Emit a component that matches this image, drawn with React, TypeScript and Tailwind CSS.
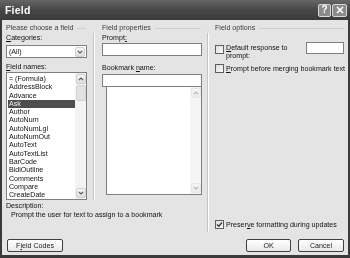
import React from "react";

const fieldNames = [
  "= (Formula)",
  "AddressBlock",
  "Advance",
  "Ask",
  "Author",
  "AutoNum",
  "AutoNumLgl",
  "AutoNumOut",
  "AutoText",
  "AutoTextList",
  "BarCode",
  "BidiOutline",
  "Comments",
  "Compare",
  "CreateDate",
];

function Chevron({ down }: { down?: boolean }) {
  return (
    <svg width="6" height="4" viewBox="0 0 6 4">
      <path
        d={down ? "M0.8 0.8 L3 3 L5.2 0.8" : "M0.8 3.2 L3 1 L5.2 3.2"}
        fill="none"
        stroke="#5a5a5a"
        strokeWidth="1.2"
      />
    </svg>
  );
}

function ScrollBtn({ down, faded }: { down?: boolean; faded?: boolean }) {
  return (
    <div
      className={`w-[10px] h-[10px] rounded-[2px] border border-[#d0d0d0] bg-gradient-to-b from-[#f6f6f6] to-[#dedede] flex items-center justify-center ${
        faded ? "opacity-40" : ""
      }`}
    >
      <Chevron down={down} />
    </div>
  );
}

function Check({ checked }: { checked?: boolean }) {
  return (
    <div className="w-[9px] h-[9px] shrink-0 border border-[#5e5e5e] bg-gradient-to-br from-[#dcdcdc] to-[#fbfbfb] flex items-center justify-center">
      {checked && (
        <svg width="7" height="7" viewBox="0 0 7 7">
          <path d="M1 3.5 L2.8 5.3 L6 1.5" fill="none" stroke="#3a3a3a" strokeWidth="1.4" />
        </svg>
      )}
    </div>
  );
}

function GroupHead({ label, w }: { label: string; w: string }) {
  return (
    <div className={`flex items-center h-[8px] ${w}`}>
      <span className="text-[#3c3c3c] whitespace-nowrap">{label}</span>
      <div className="flex-1 ml-[4px] h-px bg-[#cfcfcf]" />
    </div>
  );
}

function Btn({ children, w }: { children: React.ReactNode; w: string }) {
  return (
    <div
      className={`${w} h-[13px] rounded-[2px] border border-[#3f3f3f] bg-gradient-to-b from-[#ffffff] to-[#e9e9e9] flex items-center justify-center text-[#222]`}
    >
      {children}
    </div>
  );
}

function Sep({ h }: { h: string }) {
  return <div className={`w-[2px] ${h} mt-[9px] border-l border-[#c4c4c4] border-r border-r-white`} />;
}

export default function App() {
  return (
    <div className="w-[350px] h-[258px] grayscale flex flex-col bg-[#e4e4e4] font-['Liberation_Sans',Arial,sans-serif] text-[7.1px] leading-[8px] text-[#111]">
      {/* title bar */}
      <div className="h-[20px] shrink-0 bg-gradient-to-b from-[#666] via-[#474747] to-[#3a3a3a] flex items-center pl-[5px] pr-[3px]">
        <span className="text-white font-bold text-[10.5px] leading-none tracking-[0.2px]">Field</span>
        <div className="ml-auto flex gap-[1px]">
          <div className="w-[13px] h-[13px] rounded-[2px] border border-[#d8d8d8] bg-[#8a8a8a] flex items-center justify-center text-white font-bold text-[10px] leading-none">
            ?
          </div>
          <div className="w-[15px] h-[13px] rounded-[2px] border border-[#d8d8d8] bg-[#8a8a8a] flex items-center justify-center">
            <svg width="8" height="8" viewBox="0 0 8 8">
              <path d="M1 1 L7 7 M7 1 L1 7" stroke="white" strokeWidth="1.6" />
            </svg>
          </div>
        </div>
      </div>

      {/* body */}
      <div className="flex-1 flex flex-col border-x-[2px] border-b-[3px] border-[#3a3a3a] px-[4px] pt-[4px]">
        <div className="flex h-[208px]">
          {/* left + middle */}
          <div className="w-[196px] flex flex-col">
            <div className="flex h-[176px]">
              {/* left column */}
              <div className="w-[81px] flex flex-col">
                <GroupHead label="Please choose a field" w="w-[80px]" />
                <div className="mt-[2px] h-[8px]">
                  <span className="underline">C</span>ategories:
                </div>
                <div className="mt-[3px] h-[13px] border border-[#7f7f7f] bg-white flex items-center pl-[2px] pr-[1px]">
                  <span>(All)</span>
                  <div className="ml-auto">
                    <ScrollBtn down />
                  </div>
                </div>
                <div className="mt-[5px] h-[8px]">
                  <span className="underline">F</span>ield names:
                </div>
                <div className="mt-px h-[128px] border border-[#7f7f7f] bg-white flex">
                  <div className="flex-1 flex flex-col pt-[2px] pl-px">
                    {fieldNames.map((n) => (
                      <div
                        key={n}
                        className={`h-[8.3px] leading-[8.3px] pl-[1px] whitespace-nowrap ${
                          n === "Ask" ? "bg-[#4e4e4e] text-[#f2f2f2]" : ""
                        }`}
                      >
                        {n}
                      </div>
                    ))}
                  </div>
                  <div className="w-[11px] bg-[#f3f3f3] flex flex-col items-center pt-px pb-px">
                    <ScrollBtn />
                    <div className="w-[10px] h-[16px] mt-px rounded-[2px] border border-[#d4d4d4] bg-[#e2e2e2]" />
                    <div className="mt-auto">
                      <ScrollBtn down />
                    </div>
                  </div>
                </div>
              </div>

              <div className="ml-[6px]">
                <Sep h="h-[167px]" />
              </div>

              {/* middle column */}
              <div className="ml-[7px] w-[100px] flex flex-col">
                <GroupHead label="Field properties" w="w-[99px]" />
                <div className="mt-[2px] h-[8px]">
                  Prompt<span className="underline">:</span>
                </div>
                <div className="mt-px h-[13px] border border-[#7f7f7f] bg-white" />
                <div className="mt-[8px] h-[8px]">
                  Bookmark <span className="underline">n</span>ame:
                </div>
                <div className="mt-[2px] h-[13px] border border-[#7f7f7f] bg-white" />
                <div className="ml-[4px] h-[108px] border border-t-0 border-[#7f7f7f] bg-white flex justify-end">
                  <div className="w-[11px] bg-[#f5f5f5] flex flex-col items-center pb-px pt-px">
                    <ScrollBtn faded />
                    <div className="mt-auto">
                      <ScrollBtn down faded />
                    </div>
                  </div>
                </div>
              </div>
            </div>

            <div className="mt-[2px] h-[8px]">Description:</div>
            <div className="h-[8px] ml-[5px] mt-px whitespace-nowrap">
              Prompt the user for text to assign to a bookmark
            </div>
          </div>

          <div className="ml-[5px]">
            <Sep h="h-[199px]" />
          </div>

          {/* right column */}
          <div className="ml-[6px] w-[129px] flex flex-col">
            <GroupHead label="Field options" w="w-[129px]" />
            <div className="mt-[10px] flex items-start">
              <div className="mt-[3px]">
                <Check />
              </div>
              <div className="ml-[2px] mt-[2px] w-[78px]">
                <div>
                  <span className="underline">D</span>efault response to
                </div>
                <div>prompt:</div>
              </div>
              <div className="ml-auto w-[38px] h-[12px] border border-[#7f7f7f] bg-white" />
            </div>
            <div className="mt-[4px] flex items-center">
              <Check />
              <div className="ml-[2px] whitespace-nowrap">
                <span className="underline">P</span>rompt before merging bookmark text
              </div>
            </div>
            <div className="mt-auto mb-[3px] flex items-center">
              <Check checked />
              <div className="ml-[2px] whitespace-nowrap">
                Preser<span className="underline">v</span>e formatting during updates
              </div>
            </div>
          </div>
        </div>

        {/* buttons */}
        <div className="mt-[7px] flex items-center">
          <div className="ml-px">
            <Btn w="w-[56px]">
              <span>
                F<span className="underline">i</span>eld Codes
              </span>
            </Btn>
          </div>
          <div className="ml-auto flex gap-[7px]">
            <Btn w="w-[45px]">OK</Btn>
            <Btn w="w-[46px]">Cancel</Btn>
          </div>
        </div>
      </div>
    </div>
  );
}
